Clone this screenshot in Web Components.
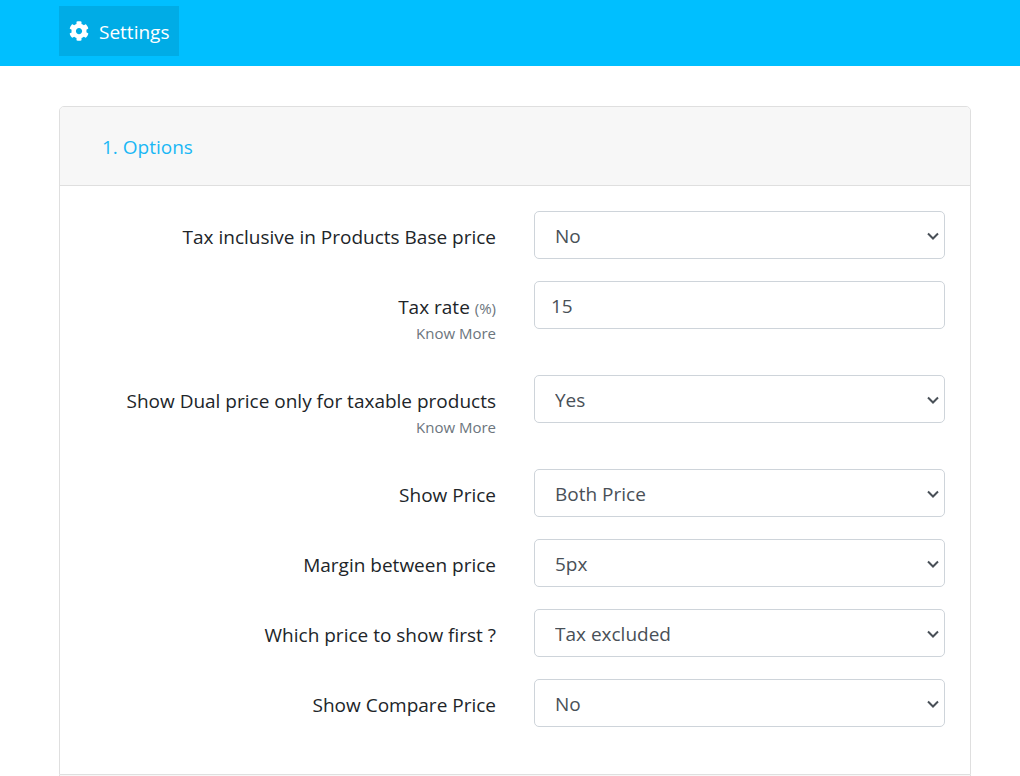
<!DOCTYPE html>
<html lang="en">
<head>
<meta charset="utf-8">
<meta name="viewport" content="width=device-width, initial-scale=1">
<title>Settings</title>
<style>
  body { margin: 0; background: #fff; color: #212529; font-family: "Open Sans", "Noto Sans", sans-serif; font-size: 19px; line-height: 28px; }
</style>
</head>
<body>
<settings-page></settings-page>

<template id="page-tpl">
  <style>
    :host { display: flex; flex-direction: column; min-height: 100vh; }
    main { flex: 1; display: flex; flex-direction: column; padding: 40px 49px 0 59px; }
    option-card:last-child { flex: 1; }
  </style>
  <top-bar></top-bar>
  <main>
    <option-card heading="1. Options">
      <field-row label="Tax inclusive in Products Base price" options="No|Yes"></field-row>
      <field-row label="Tax rate" unit="(%)" value="15" more></field-row>
      <field-row label="Show Dual price only for taxable products" options="Yes|No" more></field-row>
      <field-row label="Show Price" options="Both Price|Tax included|Tax excluded"></field-row>
      <field-row label="Margin between price" options="5px|10px|15px"></field-row>
      <field-row label="Which price to show first ?" options="Tax excluded|Tax included"></field-row>
      <field-row label="Show Compare Price" options="No|Yes"></field-row>
    </option-card>
    <option-card></option-card>
  </main>
</template>

<template id="bar-tpl">
  <style>
    :host { display: block; background: #00bfff; padding: 6px 49px 10px 59px; }
    nav { display: flex; }
    a { display: flex; align-items: center; gap: 10px; height: 50px; padding: 0 10px; color: #fff; background: #00ace6; text-decoration: none; }
    svg { width: 20px; height: 20px; fill: currentColor; }
    span { padding-top: 2px; }
  </style>
  <nav>
    <a href="#settings">
      <svg viewBox="0 0 512 512" aria-hidden="true"><path d="M487.4 315.7l-42.6-24.600c4.300-23.200 4.300-47 0-70.200l42.600-24.600c4.900-2.800 7.100-8.600 5.500-14-11.100-35.600-30-67.800-54.700-94.600-3.800-4.100-10-5.100-14.800-2.300L380.800 110c-17.900-15.400-38.500-27.300-60.800-35.100V25.800c0-5.600-3.900-10.500-9.400-11.700-36.700-8.200-74.300-7.800-109.200 0-5.500 1.200-9.400 6.100-9.400 11.700V75c-22.200 7.900-42.800 19.800-60.800 35.100L88.700 85.500c-4.900-2.800-11-1.900-14.800 2.300-24.700 26.700-43.600 58.900-54.700 94.600-1.700 5.400.6 11.200 5.500 14L67.300 221c-4.300 23.200-4.300 47 0 70.200l-42.600 24.600c-4.900 2.800-7.100 8.600-5.500 14 11.100 35.600 30 67.800 54.700 94.600 3.800 4.100 10 5.100 14.800 2.300l42.600-24.600c17.900 15.400 38.500 27.300 60.800 35.100v49.200c0 5.600 3.900 10.500 9.400 11.700 36.700 8.200 74.300 7.800 109.200 0 5.500-1.200 9.400-6.100 9.400-11.700v-49.200c22.200-7.900 42.800-19.800 60.800-35.100l42.600 24.600c4.900 2.800 11 1.900 14.800-2.300 24.700-26.700 43.600-58.900 54.700-94.600 1.500-5.500-.7-11.300-5.600-14.100zM256 336c-44.100 0-80-35.900-80-80s35.900-80 80-80 80 35.900 80 80-35.900 80-80 80z"/></svg>
      <span>Settings</span>
    </a>
  </nav>
</template>

<template id="card-tpl">
  <style>
    :host { display: block; border: 1px solid #dfdfdf; }
    :host(:first-child) { border-radius: 5px 5px 0 0; }
    :host(:last-child) { border-top: 0; border-bottom: 0; background: #f7f7f7; }
    header { padding: 26px 42px 24px; background: #f7f7f7; border-bottom: 1px solid #dfdfdf; border-radius: 4px 4px 0 0; }
    h2 { margin: 0; font: inherit; color: #1ab7f5; }
    .body { padding: 25px; }
    [hidden] { display: none; }
  </style>
  <header><h2></h2></header>
  <div class="body"><slot></slot></div>
</template>

<template id="row-tpl">
  <style>
    :host { display: grid; grid-template-columns: 1fr 1fr; gap: 38px; margin-bottom: 22px; }
    .caption { padding-top: 12px; text-align: right; }
    label { display: block; }
    small, a { font-size: 15px; color: #6c757d; }
    small { line-height: 20px; }
    a { display: block; line-height: 24px; padding-bottom: 8px; text-decoration: none; }
    .control { position: relative; display: block; height: 48px; }
    input, select { box-sizing: border-box; display: block; width: 100%; height: 48px; margin: 0; border: 1px solid #ced4da; border-radius: 5px; background: #fff; color: #495057; font: inherit; appearance: none; }
    input { padding: 2px 16px 0; }
    select { padding: 2px 32px 0 20px; }
    svg { position: absolute; right: 6px; top: 21px; width: 12px; height: 8px; fill: none; stroke: #495057; stroke-width: 2; pointer-events: none; }
  </style>
  <div class="caption"><label for="field"></label></div>
  <div class="control"></div>
</template>

<script>
  const stamp = (host, id) => {
    const root = host.attachShadow({ mode: "open" });
    root.append(document.getElementById(id).content.cloneNode(true));
    return root;
  };

  class FieldRow extends HTMLElement {
    connectedCallback() {
      if (this.shadowRoot) return;
      const root = stamp(this, "row-tpl");
      const label = root.querySelector("label");
      const control = root.querySelector(".control");
      label.textContent = this.getAttribute("label");
      if (this.hasAttribute("unit")) {
        const unit = document.createElement("small");
        unit.textContent = this.getAttribute("unit");
        label.append(" ", unit);
      }
      if (this.hasAttribute("more")) {
        const link = document.createElement("a");
        link.href = "#more";
        link.textContent = "Know More";
        label.after(link);
      }
      if (this.hasAttribute("options")) {
        const select = document.createElement("select");
        select.id = "field";
        for (const text of this.getAttribute("options").split("|")) select.add(new Option(text));
        control.append(select);
        control.insertAdjacentHTML("beforeend", '<svg viewBox="0 0 12 8" aria-hidden="true"><path d="M1 1.500l5 5 5-5"/></svg>');
      } else {
        const input = document.createElement("input");
        input.id = "field";
        input.type = "text";
        input.value = this.getAttribute("value");
        control.append(input);
      }
    }
  }

  class OptionCard extends HTMLElement {
    connectedCallback() {
      if (this.shadowRoot) return;
      const root = stamp(this, "card-tpl");
      const heading = this.getAttribute("heading");
      root.querySelector("h2").textContent = heading;
      root.querySelector("header").hidden = !heading;
      root.querySelector(".body").hidden = !heading;
    }
  }

  class TopBar extends HTMLElement {
    connectedCallback() { if (!this.shadowRoot) stamp(this, "bar-tpl"); }
  }

  class SettingsPage extends HTMLElement {
    connectedCallback() { if (!this.shadowRoot) stamp(this, "page-tpl"); }
  }

  customElements.define("field-row", FieldRow);
  customElements.define("option-card", OptionCard);
  customElements.define("top-bar", TopBar);
  customElements.define("settings-page", SettingsPage);
</script>
</body>
</html>
